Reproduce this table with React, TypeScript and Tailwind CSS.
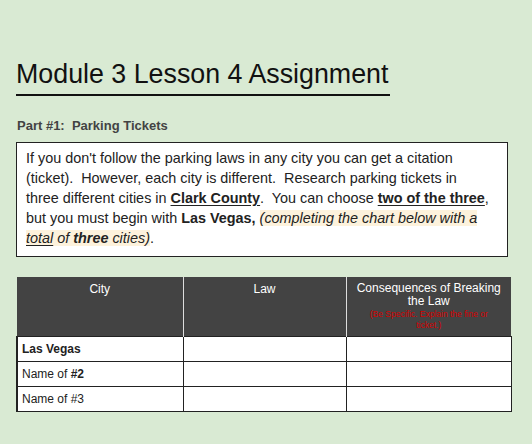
export default function App() {
  const font = { fontFamily: '"Liberation Sans", Arial, sans-serif' };
  return (
    <div className="w-[532px] h-[444px] bg-[#d9ead3] overflow-hidden text-[#222]" style={font}>
      <div className="pl-4 pt-[58px] w-[520px]">
        <h1 className="inline-block text-[26.8px] leading-[32px] text-[#111] border-b-2 border-[#111] pb-[4px] pr-[2px]">
          Module 3 Lesson 4 Assignment
        </h1>
        <p className="mt-[22px] text-[13px] font-bold text-[#434343] leading-[16px] pl-[1px]">
          Part #1:&nbsp; Parking Tickets
        </p>
        <div className="mt-[8px] w-[492px] h-[115px] bg-white border border-[#222] pl-[9px] pr-1 pt-[5px] text-[14.4px] leading-[20px] whitespace-nowrap">
          If you don't follow the parking laws in any city you can get a citation
          <br />
          (ticket).&nbsp; However, each city is different.&nbsp; Research parking tickets in
          <br />
          three different cities in{" "}
          <span className="font-bold underline underline-offset-2">Clark County</span>.&nbsp; You can choose{" "}
          <span className="font-bold underline underline-offset-2">two of the three</span>,
          <br />
          but you must begin with <span className="font-bold">Las Vegas,</span>{" "}
          <span className="italic bg-[#fdf2dc]">(completing the chart below with a</span>
          <br />
          <span className="italic bg-[#fdf2dc]">
            <span className="underline underline-offset-2">total</span> of <span className="font-bold">three</span> cities)
          </span>
          .
        </div>
        <table className="mt-[20px] w-[494px] border-collapse text-[12px] table-fixed">
          <colgroup>
            <col className="w-[166px]" />
            <col className="w-[163px]" />
            <col className="w-[165px]" />
          </colgroup>
          <thead>
            <tr className="h-[59px] bg-[#434343] text-white align-top">
              <th className="font-normal border-r border-[#ddd] pt-[5px] leading-[14px]">City</th>
              <th className="font-normal border-r border-[#ddd] pt-[5px] leading-[14px]">Law</th>
              <th className="font-normal pt-[5px] leading-[13px] px-2">
                Consequences of Breaking the Law
                <div className="mt-[1px] text-[8.5px] leading-[11px] text-[#d40000] px-[8px]">(Be Specific. Explain the fine or ticket.)</div>
              </th>
            </tr>
          </thead>
          <tbody className="bg-white">
            <tr className="h-[25px]">
              <td className="border border-[#222] border-l-2 pl-[4px] font-bold">Las Vegas</td>
              <td className="border border-[#222]"></td>
              <td className="border border-[#222]"></td>
            </tr>
            <tr className="h-[25px]">
              <td className="border border-[#222] border-l-2 pl-[4px]">Name of <span className="font-bold">#2</span></td>
              <td className="border border-[#222]"></td>
              <td className="border border-[#222]"></td>
            </tr>
            <tr className="h-[25px]">
              <td className="border border-[#222] border-l-2 pl-[4px]">Name of #3</td>
              <td className="border border-[#222]"></td>
              <td className="border border-[#222]"></td>
            </tr>
          </tbody>
        </table>
      </div>
    </div>
  );
}
